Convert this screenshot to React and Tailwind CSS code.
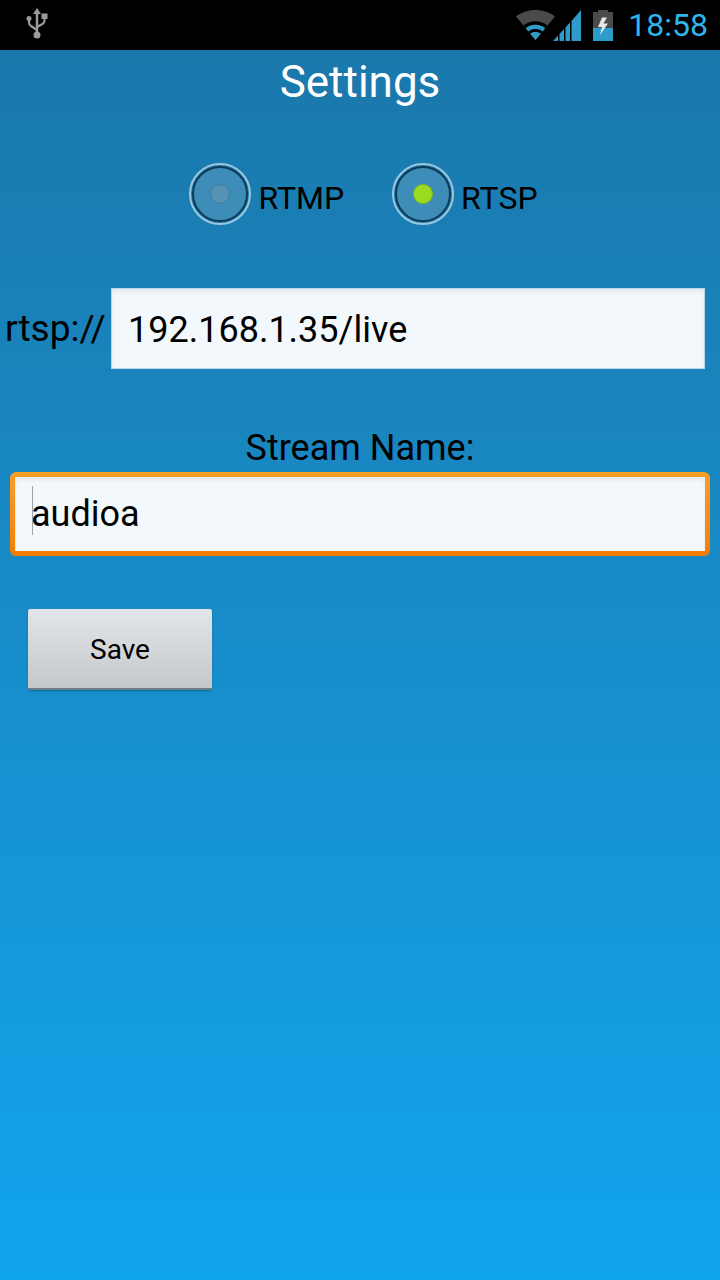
import React from "react";

function Usb() {
  return (
    <svg width="24" height="36" viewBox="0 0 24 36" fill="none">
      <path d="M12 1l4 6h-8z" fill="#9a9a9a" />
      <path d="M12 6v22" stroke="#9a9a9a" strokeWidth="2.5" />
      <circle cx="12" cy="28" r="3.5" fill="#9a9a9a" />
      <circle cx="4" cy="11.5" r="2.500" fill="#9a9a9a" />
      <rect x="16.5" y="6.5" width="6" height="5.5" fill="#9a9a9a" />
      <path d="M4 12v3.5q0 2.500 2 3.500l6 4" stroke="#9a9a9a" strokeWidth="2.2" />
      <path d="M19.5 11v2.500q0 2.500-2 3.500l-5.500 3" stroke="#9a9a9a" strokeWidth="2.2" />
    </svg>
  );
}

function Wifi() {
  return (
    <svg width="39" height="30" viewBox="0 0 39 30">
      <path d="M19.500 30L0 6.500C5 2.500 12 0 19.500 0S34 2.500 39 6.500z" fill="#4a4a4a" />
      <path d="M7.500 15.500C10.500 12.800 14.800 11.200 19.500 11.200s9 1.600 12 4.300l-2.300 2.800C26.700 16.100 23.300 14.800 19.500 14.800s-7.200 1.300-9.700 3.500z" fill="#000" />
      <path d="M9.800 18.300C12.300 16.100 15.700 14.800 19.500 14.800s7.200 1.300 9.700 3.500l-2.600 3.100C24.800 19.900 22.300 19 19.500 19s-5.300.9-7.100 2.400z" fill="#2d9cca" />
      <path d="M12.400 21.400C14.200 19.900 16.700 19 19.500 19s5.300.9 7.100 2.400l-1.900 2.300C23.300 22.600 21.500 22 19.500 22s-3.800.6-5.200 1.700z" fill="#000" />
      <path d="M14.300 23.700C15.700 22.600 17.500 22 19.500 22s3.800.6 5.200 1.700L19.500 30z" fill="#2d9cca" />
    </svg>
  );
}

function Signal() {
  return (
    <svg width="28" height="31" viewBox="0 0 28 31">
      <path d="M0 31L5 25.500V31z" fill="#2d9cca" />
      <path d="M6.500 24L11 19V31H6.500z" fill="#2d9cca" />
      <path d="M12.500 17.500L17 12.500V31H12.500z" fill="#2d9cca" />
      <path d="M18.500 11L28 0V31H18.500z" fill="#2d9cca" />
    </svg>
  );
}

function Battery() {
  return (
    <svg width="20" height="31" viewBox="0 0 20 31">
      <rect x="5" y="0" width="10" height="3" fill="#4a4a4a" />
      <rect x="0" y="2" width="20" height="16" fill="#4a4a4a" />
      <rect x="0" y="18" width="20" height="13" fill="#2d9cca" />
      <path d="M9 7.500L5 17h4L7 25 15 13.500h-4.500L14 7.500z" fill="#e8e8e8" />
    </svg>
  );
}

function Radio({ checked }) {
  return (
    <div className="w-[62px] h-[62px] rounded-full border-[2px] border-[#9cc6dc] flex items-center justify-center shrink-0">
      <div className="w-[56px] h-[56px] rounded-full border-[2px] border-[#0f3a55] bg-[#3d8db8] flex items-center justify-center">
        {checked ? (
          <div className="w-[20px] h-[20px] rounded-full bg-[#9bdb1e] border border-[#7fb81a]" />
        ) : (
          <div className="w-[20px] h-[20px] rounded-full bg-[#5592b3] border border-[#3f7c9f]" />
        )}
      </div>
    </div>
  );
}

export default function App() {
  return (
    <div className="w-[720px] h-[1280px] flex flex-col overflow-hidden font-['Roboto',sans-serif] text-black">
      <div className="h-[50px] bg-black flex items-center justify-between shrink-0 pl-[25px] pr-[12px]">
        <Usb />
        <div className="flex items-center">
          <Wifi />
          <div className="ml-[-2px] mr-[12px]"><Signal /></div>
          <div className="mr-[15px]"><Battery /></div>
          <span className="text-[32px] leading-none text-[#2fb5e8]">18:58</span>
        </div>
      </div>
      <div className="flex-1 flex flex-col bg-gradient-to-b from-[#1a78ab] to-[#11a5ee]">
        <div className="text-center text-white text-[44px] leading-[47px] pt-[9px]">Settings</div>
        <div className="flex justify-center items-center mt-[57px] gap-[48px] pl-[7px]">
          <div className="flex items-center gap-[7px]">
            <Radio />
            <span className="text-[32px] leading-none pt-[8px]">RTMP</span>
          </div>
          <div className="flex items-center gap-[7px]">
            <Radio checked />
            <span className="text-[32px] leading-none pt-[8px]">RTSP</span>
          </div>
        </div>
        <div className="flex items-center mt-[63px] pl-[5px] pr-[15px]">
          <span className="text-[37px] leading-none w-[106px] shrink-0">rtsp://</span>
          <div className="flex-1 h-[81px] bg-[#f2f8fc] border border-[#b9d6e7] flex items-center pl-[16px] pt-[2px] text-[36px] shadow-[inset_0_3px_4px_rgba(0,0,0,0.06)]">
            192.168.1.35/live
          </div>
        </div>
        <div className="text-center text-[36px] leading-[42px] mt-[58px]">Stream Name:</div>
        <div className="mx-[10px] mt-[3px] h-[84px] rounded-[6px] bg-gradient-to-b from-[#fb9e26] to-[#f57c00] p-[5px]">
          <div className="h-full bg-[#f2f8fc] flex items-center pl-[16px] text-[36px] shadow-[inset_0_3px_4px_rgba(0,0,0,0.06)]">
            <span className="relative">
              <span className="absolute left-[1px] top-[-1px] w-px h-[49px] bg-[#9aa4aa]" />
              audioa
            </span>
          </div>
        </div>
        <div className="ml-[28px] mt-[53px] w-[184px] h-[81px] rounded-[2px] bg-gradient-to-b from-[#e2e6e9] to-[#c4c8cb] border-b-2 border-b-[#6e7e88] shadow-[0_1px_2px_rgba(0,0,0,0.3)] flex items-center justify-center text-[28px] pt-[2px]">
          Save
        </div>
      </div>
    </div>
  );
}
